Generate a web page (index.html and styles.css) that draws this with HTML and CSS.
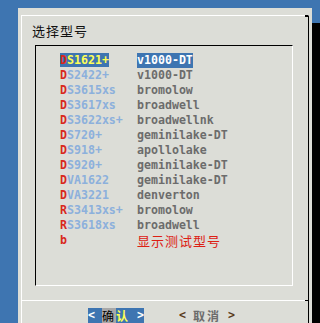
FILE: index.html
```html
<!DOCTYPE html>
<html lang="zh-CN">
<head>
    <meta charset="UTF-8">
    <meta name="viewport" content="width=device-width, initial-scale=1.0">
    <title>选择型号</title>
    <link rel="stylesheet" href="styles.css">
</head>
<body>
    <div class="dialog">
        <div class="frame">
            <div class="title">选择型号</div>

            <div class="menu">
                <div class="item selected">
                    <span class="tag"><span class="key">D</span><span class="rest">S1621+</span></span>
                    <span class="desc">v1000-DT</span>
                </div>
                <div class="item">
                    <span class="tag"><span class="key">D</span><span class="rest">S2422+</span></span>
                    <span class="desc">v1000-DT</span>
                </div>
                <div class="item">
                    <span class="tag"><span class="key">D</span><span class="rest">S3615xs</span></span>
                    <span class="desc">bromolow</span>
                </div>
                <div class="item">
                    <span class="tag"><span class="key">D</span><span class="rest">S3617xs</span></span>
                    <span class="desc">broadwell</span>
                </div>
                <div class="item">
                    <span class="tag"><span class="key">D</span><span class="rest">S3622xs+</span></span>
                    <span class="desc">broadwellnk</span>
                </div>
                <div class="item">
                    <span class="tag"><span class="key">D</span><span class="rest">S720+</span></span>
                    <span class="desc">geminilake-DT</span>
                </div>
                <div class="item">
                    <span class="tag"><span class="key">D</span><span class="rest">S918+</span></span>
                    <span class="desc">apollolake</span>
                </div>
                <div class="item">
                    <span class="tag"><span class="key">D</span><span class="rest">S920+</span></span>
                    <span class="desc">geminilake-DT</span>
                </div>
                <div class="item">
                    <span class="tag"><span class="key">D</span><span class="rest">VA1622</span></span>
                    <span class="desc">geminilake-DT</span>
                </div>
                <div class="item">
                    <span class="tag"><span class="key">D</span><span class="rest">VA3221</span></span>
                    <span class="desc">denverton</span>
                </div>
                <div class="item">
                    <span class="tag"><span class="key">R</span><span class="rest">S3413xs+</span></span>
                    <span class="desc">bromolow</span>
                </div>
                <div class="item">
                    <span class="tag"><span class="key">R</span><span class="rest">S3618xs</span></span>
                    <span class="desc">broadwell</span>
                </div>
                <div class="item">
                    <span class="tag"><span class="key">b</span></span>
                    <span class="desc cjk warn">显示测试型号</span>
                </div>
            </div>

            <div class="separator"></div>

            <div class="buttons">
                <span class="btn active"><span class="arrow">&lt;</span> <span class="cjk cursor">确</span><span class="cjk hot">认</span> <span class="arrow">&gt;</span></span>
                <span class="btn"><span class="arrow">&lt;</span> <span class="cjk label">取消</span> <span class="arrow">&gt;</span></span>
            </div>
        </div>
    </div>
</body>
</html>
```

FILE: styles.css
```css
html, body {
    margin: 0;
    padding: 0;
}
body {
    width: 320px;
    height: 323px;
    overflow: hidden;
    background: #3e75b1;
    font-family: "DejaVu Sans Mono", "Noto Sans CJK SC", monospace;
    font-size: 11.6px;
    line-height: 15px;
}
.dialog {
    margin: 8px 0 0 18px;
    width: 294px;
    height: 330px;
    background: #dcddd7;
    box-shadow: 8px 15px 0 0 #000;
    overflow: hidden;
}
.frame {
    position: relative;
    margin: 7px 0 0 3px;
    width: 286px;
    height: 330px;
    border-top: 1px solid #fff;
    border-left: 1px solid #fff;
    border-right: 1px solid #000;
    padding-top: 7px;
}
.frame::after {
    content: "";
    position: absolute;
    top: -1px;
    right: 0;
    width: 3px;
    height: 2px;
    background: #000;
}
.cjk {
    font-family: "Noto Sans CJK SC", sans-serif;
    font-size: 13px;
    letter-spacing: 1px;
}
.title {
    padding-left: 10px;
    height: 15px;
    font-family: "Noto Sans CJK SC", sans-serif;
    font-size: 13px;
    letter-spacing: 1px;
    color: #111;
}
.menu {
    margin: 7px 0 0 13px;
    width: 258px;
    height: 241px;
    border-top: 1px solid #000;
    border-left: 1px solid #000;
    border-right: 1px solid #fff;
    border-bottom: 1px solid #fff;
    padding-top: 7px;
    box-sizing: border-box;
    padding-left: 24px;
}
.item {
    display: flex;
    height: 15px;
    font-weight: bold;
    white-space: pre;
}
.tag {
    width: 77px;
}
.key {
    color: #d8281c;
}
.rest {
    color: #8cb0dc;
}
.desc {
    color: #6c6c6c;
}
.desc.warn {
    color: #dd2014;
    font-weight: normal;
}
.selected .tag span:first-child,
.selected .rest,
.selected .desc {
    background: #3e75b1;
}
.selected .rest {
    color: #ffff55;
}
.selected .desc {
    color: #fff;
}
.separator {
    position: relative;
    margin-top: 14px;
    height: 1px;
    background: #fff;
}
.separator::after {
    content: "";
    position: absolute;
    right: 0;
    top: 0;
    width: 3px;
    height: 1px;
    background: #000;
}
.buttons {
    display: flex;
    gap: 35px;
    margin-top: 7px;
    padding-left: 66px;
    height: 15px;
    white-space: pre;
}
.btn {
    display: block;
    height: 15px;
    overflow: hidden;
    font-weight: bold;
}
.btn .cjk {
    display: inline-block;
    vertical-align: top;
    height: 15px;
    font-size: 12px;
    line-height: 15px;
    letter-spacing: 2px;
}
.btn .arrow {
    color: #5a3c1c;
}
.btn .label {
    color: #6c6c6c;
    font-weight: bold;
}
.btn.active {
    background: #3e75b1;
}
.btn.active .arrow {
    color: #fff;
}
.btn .cursor {
    background: #a8a8a8;
    color: #000;
    font-weight: normal;
}
.btn .hot {
    color: #ffff55;
    font-weight: bold;
}
```
